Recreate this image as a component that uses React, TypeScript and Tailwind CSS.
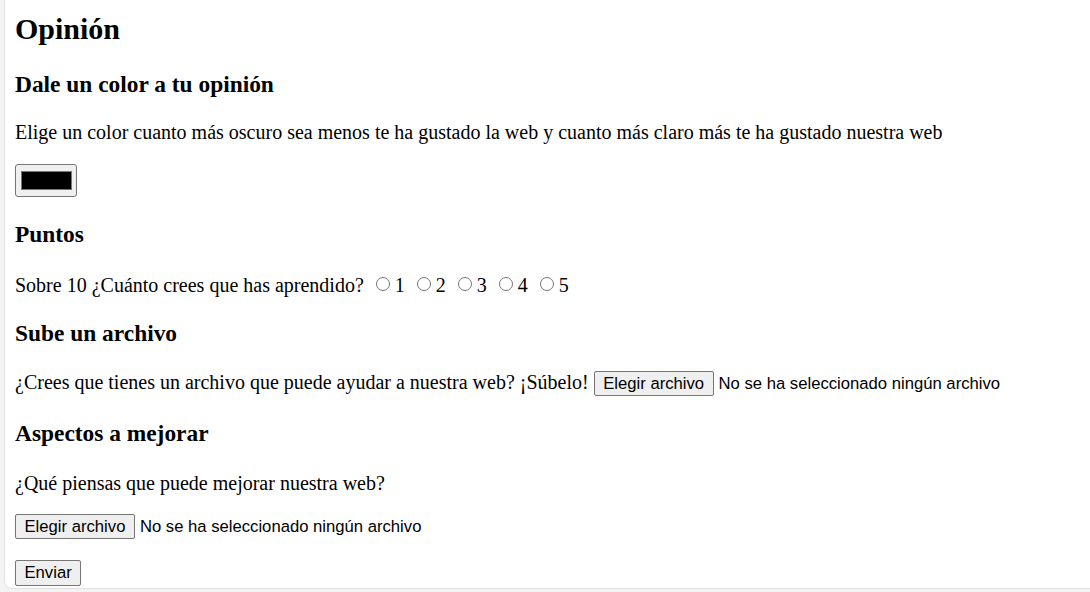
export default function App() {
  const serif = "font-['Liberation_Serif','Times_New_Roman',serif]";
  const sans = "font-['Liberation_Sans',Arial,sans-serif]";
  const btn =
    "inline-block h-[25px] px-[8.5px] py-[2px] leading-[19px] text-[16.67px] text-black bg-[#efefef] border border-[#767676] rounded-[2px] " +
    sans;

  const Radio = () => (
    <span className="inline-block w-[14px] h-[14px] mb-px ml-[7px] mr-[5px] rounded-full border border-[#767676] bg-white align-baseline" />
  );

  return (
    <div className="h-[592px] w-[1090px] bg-[#f3f3f3] pl-[4px] pb-[3px]">
      <div
        className={
          "h-full bg-white border-l border-b border-[#e2e2e2] rounded-bl-[8px] pl-[10px] pt-[12px] text-black " +
          serif
        }
      >
        <h1 className="text-[30px] leading-[34px] font-bold">Opinión</h1>

        <h3 className="mt-[25px] text-[23.4px] leading-[27px] font-bold">Dale un color a tu opinión</h3>
        <p className="mt-[23px] text-[20px] leading-[23px]">
          Elige un color cuanto más oscuro sea menos te ha gustado la web y cuanto más claro más te ha gustado nuestra web
        </p>
        <div className="mt-[20px] flex h-[33px] w-[62px] items-center justify-center rounded-[3px] border border-[#767676] bg-[#efefef]">
          <div className="h-[19px] w-[51px] border border-[#777777] bg-black" />
        </div>

        <h3 className="mt-[24px] text-[23.4px] leading-[27px] font-bold">Puntos</h3>
        <p className="mt-[26px] text-[20px] leading-[23px]">
          Sobre 10 ¿Cuánto crees que has aprendido?{" "}
          <Radio />1 <Radio />2 <Radio />3 <Radio />4 <Radio />5
        </p>

        <h3 className="mt-[23px] text-[23.4px] leading-[27px] font-bold">Sube un archivo</h3>
        <div className="mt-[24px] flex items-baseline text-[20px] leading-[23px]">
          <span className="whitespace-pre">¿Crees que tienes un archivo que puede ayudar a nuestra web? ¡Súbelo! </span>
          <span className={btn}>Elegir archivo</span>
          <span className={"ml-[5px] text-[16.67px] leading-[19px] " + sans}>No se ha seleccionado ningún archivo</span>
        </div>

        <h3 className="mt-[24px] text-[23.4px] leading-[27px] font-bold">Aspectos a mejorar</h3>
        <p className="mt-[25px] text-[20px] leading-[23px]">¿Qué piensas que puede mejorar nuestra web?</p>
        <div className="mt-[19px] flex items-baseline">
          <span className={btn}>Elegir archivo</span>
          <span className={"ml-[5px] text-[16.67px] leading-[19px] " + sans}>No se ha seleccionado ningún archivo</span>
        </div>
        <div className="mt-[21px]">
          <span className={btn + " h-[26px] py-[2.5px]"}>Enviar</span>
        </div>
      </div>
    </div>
  );
}
